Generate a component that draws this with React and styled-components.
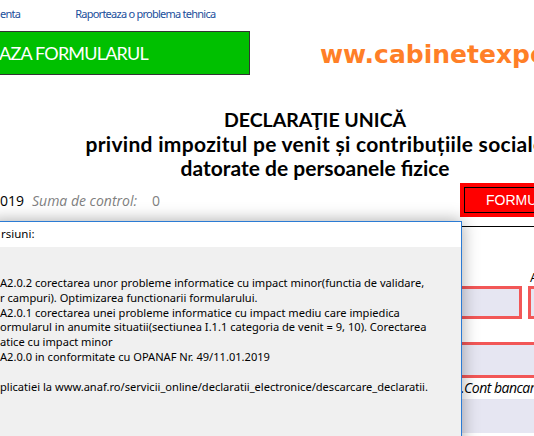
import React from "react";
import styled, { createGlobalStyle } from "styled-components";

const GlobalStyle = createGlobalStyle`
  html, body {
    margin: 0;
    padding: 0;
    background: #ffffff;
  }
  body {
    font-family: "Open Sans", "Noto Sans", sans-serif;
  }
`;

const notes = [
  "A2.0.2 corectarea unor probleme informatice cu impact minor(functia de validare,",
  "r campuri). Optimizarea functionarii formularului.",
  "A2.0.1 corectarea unei probleme informatice cu impact mediu care impiedica",
  "ormularul in anumite situatii(sectiunea I.1.1 categoria de venit = 9, 10). Corectarea",
  "atice cu impact minor",
  "A2.0.0 in conformitate cu OPANAF Nr. 49/11.01.2019",
  "",
  "plicatiei la www.anaf.ro/servicii_online/declaratii_electronice/descarcare_declaratii.",
];

const App = () => (
  <>
    <GlobalStyle />
    <Page>
      <TopLinks>
        <Link>enta</Link>
        <Link $left={55}>Raporteaza o problema tehnica</Link>
      </TopLinks>

      <Header>
        <GreenButton>AZA FORMULARUL</GreenButton>
        <Site>ww.cabinetexpert.ro</Site>
      </Header>

      <Title>
        <TitleLine $size={19.5}>DECLARAŢIE UNICĂ</TitleLine>
        <TitleLine $spacing={0.3}>privind impozitul pe venit și contribuțiile sociale</TitleLine>
        <TitleLine>datorate de persoanele fizice</TitleLine>
      </Title>

      <ControlRow>
        <Year>019</Year>
        <ControlLabel>Suma de control:</ControlLabel>
        <ControlValue>0</ControlValue>
        <RedButton>
          <RedInner>FORMULARUL</RedInner>
        </RedButton>
      </ControlRow>

      <FormArea>
        <Rule />
        <FieldLabel>A</FieldLabel>
        <BoxRow>
          <Box $width={67} />
          <Box $width={30} />
        </BoxRow>
        <WideBox />
        <BankLabel>.Cont bancar</BankLabel>
        <Shade />
      </FormArea>

      <Dialog>
        <DialogTitle>rsiuni:</DialogTitle>
        <DialogBody>
          {notes.map((line, i) => (
            <Note key={i}>{line || "\u00a0"}</Note>
          ))}
        </DialogBody>
      </Dialog>
    </Page>
  </>
);

export default App;

const Page = styled.div`
  position: relative;
  width: 534px;
  height: 436px;
  overflow: hidden;
  background: #ffffff;
`;

const TopLinks = styled.div`
  display: flex;
  align-items: center;
  height: 26px;
`;

const Link = styled.span`
  margin-left: ${(p) => p.$left || 0}px;
  color: #1a4f9c;
  font-family: "Noto Sans", sans-serif;
  font-size: 11px;
  letter-spacing: -0.75px;
  white-space: nowrap;
`;

const Header = styled.div`
  display: flex;
  align-items: center;
  height: 50px;
`;

const GreenButton = styled.div`
  box-sizing: border-box;
  flex-shrink: 0;
  width: 251px;
  height: 44px;
  margin-left: -1px;
  margin-top: 3px;
  background: #00c000;
  border: 1px solid #333333;
  border-left: none;
  color: #ffffff;
  font-family: "Lato", sans-serif;
  font-size: 18px;
  letter-spacing: -0.8px;
  line-height: 42px;
  white-space: nowrap;
`;

const Site = styled.div`
  margin-left: 70px;
  margin-top: 6px;
  color: #ff7f27;
  font-family: "DejaVu Sans", Verdana, sans-serif;
  font-weight: bold;
  font-size: 25px;
  white-space: nowrap;
`;

const Title = styled.div`
  display: flex;
  flex-direction: column;
  align-items: center;
  width: 630px;
  margin-top: 32px;
  font-family: "Lato", sans-serif;
  font-weight: bold;
  color: #000000;
`;

const TitleLine = styled.div`
  font-size: ${(p) => p.$size || 21}px;
  letter-spacing: ${(p) => p.$spacing || 0}px;
  line-height: 24px;
  white-space: nowrap;
`;

const ControlRow = styled.div`
  display: flex;
  align-items: center;
  height: 34px;
  margin-top: 3px;
  font-family: "Open Sans", sans-serif;
  font-size: 14px;
`;

const Year = styled.span`
  color: #000000;
`;

const ControlLabel = styled.span`
  margin-left: 8px;
  color: #808080;
  font-style: italic;
`;

const ControlValue = styled.span`
  margin-left: 15px;
  color: #808080;
`;

const RedButton = styled.div`
  box-sizing: border-box;
  flex-shrink: 0;
  margin-left: auto;
  width: 80px;
  height: 34px;
  padding: 4px 0 4px 4px;
  margin-right: -6px;
  background: #ff0000;
`;

const RedInner = styled.div`
  box-sizing: border-box;
  height: 100%;
  border: 1px solid #000000;
  border-right: none;
  padding-left: 21px;
  color: #ffffff;
  font-family: "Liberation Sans", Arial, sans-serif;
  font-size: 14px;
  line-height: 24px;
  white-space: nowrap;
  overflow: hidden;
`;

const FormArea = styled.div`
  display: flex;
  flex-direction: column;
  margin-left: 455px;
  margin-top: 9px;
`;

const Rule = styled.div`
  height: 1px;
  background: #000000;
`;

const FieldLabel = styled.div`
  height: 15px;
  margin-top: 43px;
  padding-left: 75px;
  font-family: "Open Sans", sans-serif;
  font-size: 13px;
  line-height: 15px;
  white-space: nowrap;
`;

const BoxRow = styled.div`
  display: flex;
  gap: 6px;
  margin-top: 1px;
`;

const Box = styled.div`
  box-sizing: border-box;
  flex-shrink: 0;
  width: ${(p) => p.$width}px;
  height: 33px;
  background: #e6e6f2;
  border: 3px solid #f25757;
`;

const WideBox = styled.div`
  box-sizing: border-box;
  height: 36px;
  margin-top: 23px;
  background: #e6e6f2;
  border-top: 3px solid #f25757;
  border-bottom: 3px solid #f25757;
`;

const BankLabel = styled.div`
  height: 21px;
  padding-left: 6px;
  font-family: "Open Sans", sans-serif;
  font-style: italic;
  font-size: 14px;
  line-height: 20px;
  letter-spacing: -0.5px;
  white-space: nowrap;
`;

const Shade = styled.div`
  height: 34px;
  background: #e6e6f2;
`;

const Dialog = styled.div`
  position: absolute;
  left: -10px;
  top: 221px;
  width: 470px;
  height: 240px;
  background: #f0f0f0;
  border: 1px solid #2b7bd4;
  box-shadow: 0 0 16px rgba(0, 0, 0, 0.35);
  font-family: "Noto Sans", sans-serif;
  color: #000000;
`;

const DialogTitle = styled.div`
  height: 25px;
  padding-left: 10px;
  background: #ffffff;
  font-size: 11.5px;
  line-height: 24px;
`;

const DialogBody = styled.div`
  padding: 29px 0 0 9px;
`;

const Note = styled.div`
  font-size: 11.1px;
  line-height: 14.8px;
  white-space: nowrap;
`;
